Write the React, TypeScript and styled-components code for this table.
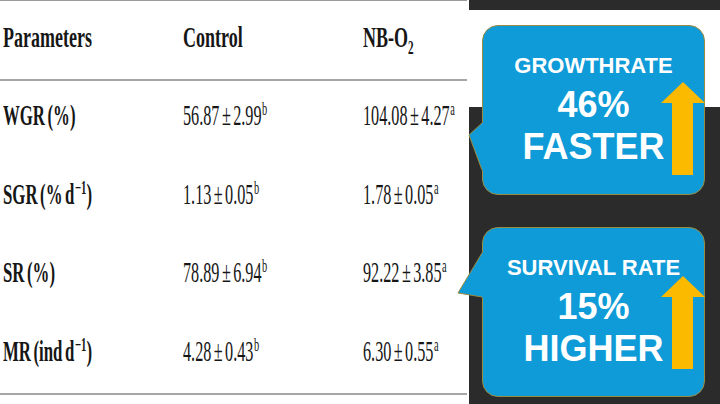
import styled, { createGlobalStyle } from "styled-components";

const GlobalStyle = createGlobalStyle`
	html, body {
		margin: 0;
		padding: 0;
		background: #fff;
	}
	#root {
		width: 720px;
		height: 404px;
		overflow: hidden;
	}
`;

interface RowProps {
	$head?: boolean;
	$last?: boolean;
}

interface SqueezeProps {
	$k: number;
}

interface BandProps {
	$h?: number;
	$dark?: boolean;
}

const rows = [
	{ label: "WGR (%)", unit: "", control: "56.87 ± 2.99", nb: "104.08 ± 4.27" },
	{ label: "SGR (% d", unit: "−1", control: "1.13 ± 0.05", nb: "1.78 ± 0.05" },
	{ label: "SR (%)", unit: "", control: "78.89 ± 6.94", nb: "92.22 ± 3.85" },
	{ label: "MR (ind d", unit: "−1", control: "4.28 ± 0.43", nb: "6.30 ± 0.55" },
];

const callouts = [
	{ label: "GROWTHRATE", figure: "46%", word: "FASTER", tail: "30,98 17,110 30,145", arrowTop: 56 },
	{ label: "SURVIVAL RATE", figure: "15%", word: "HIGHER", tail: "30,26 6,66 30,70", arrowTop: 48 },
];

function Arrow({ top }: { top: number }) {
	return (
		<ArrowSvg style={{ top }} width="44" height="93" viewBox="0 0 44 93">
			<polygon points="22,0 44,21 32,21 32,93 11,93 11,21 0,21" fill="#fbb900" />
		</ArrowSvg>
	);
}

function Tail({ points }: { points: string }) {
	const [a, tip, b] = points.split(" ");
	const [ax, ay] = a.split(",").map(Number);
	const [bx, by] = b.split(",").map(Number);
	return (
		<TailSvg width="34" height="170" viewBox="0 0 34 170">
			<polygon points={`${ax + 4},${ay - 2} ${a} ${tip} ${b} ${bx + 4},${by + 2}`} fill="#0f9bd7" />
			<polyline points={points} fill="none" stroke="#9b8a3f" strokeWidth="1" />
		</TailSvg>
	);
}

function App() {
	return (
		<>
			<GlobalStyle />
			<Page>
				<Table>
					<Row $head>
						<Cell>
							<Squeeze $k={0.6}>Parameters</Squeeze>
						</Cell>
						<Cell>
							<Squeeze $k={0.6}>Control</Squeeze>
						</Cell>
						<Cell>
							<Squeeze $k={0.6}>
								NB-O<Sub>2</Sub>
							</Squeeze>
						</Cell>
					</Row>
					{rows.map((r, i) => (
						<Row key={r.label} $last={i === rows.length - 1}>
							<Cell>
								<Squeeze $k={0.56}>
									{r.label}
									{r.unit ? (
										<>
											<Sup>{r.unit}</Sup>)
										</>
									) : null}
								</Squeeze>
							</Cell>
							<Value>
								<Squeeze $k={0.54}>
									{r.control}
									<Sup>b</Sup>
								</Squeeze>
							</Value>
							<Value>
								<Squeeze $k={0.54}>
									{r.nb}
									<Sup>a</Sup>
								</Squeeze>
							</Value>
						</Row>
					))}
				</Table>
				<Panel>
					<Band $h={10} $dark />
					<Band $h={97} />
					<Band $dark />
					<Callouts>
						{callouts.map((c) => (
							<Bubble key={c.label}>
								<Tail points={c.tail} />
								<Label>{c.label}</Label>
								<Figure>{c.figure}</Figure>
								<Word>{c.word}</Word>
								<Arrow top={c.arrowTop} />
							</Bubble>
						))}
					</Callouts>
				</Panel>
			</Page>
		</>
	);
}

const Page = styled.div`
	display: flex;
	width: 720px;
	height: 404px;
	background: #fff;
	overflow: hidden;
`;

const Table = styled.div`
	flex: none;
	width: 467px;
	border-top: 1px solid #9a9a9a;
	font-family: "Liberation Serif", "Times New Roman", serif;
	color: #161616;
`;

const Row = styled.div<RowProps>`
	display: grid;
	grid-template-columns: 180px 180px 1fr;
	box-sizing: border-box;
	height: ${({ $head }) => ($head ? "80px" : "78.5px")};
	padding-top: ${({ $head }) => ($head ? "21px" : "19px")};
	font-size: 30px;
	line-height: 30px;
	word-spacing: -0.1em;
	border-bottom: ${({ $head, $last }) => ($head || $last ? "2px solid #a6a6a6" : "none")};
`;

const Cell = styled.div`
	padding-left: 3px;
	white-space: nowrap;
	font-weight: 700;
`;

const Value = styled(Cell)`
	font-weight: 400;
`;

const Squeeze = styled.span<SqueezeProps>`
	display: inline-block;
	white-space: nowrap;
	transform: scaleX(${({ $k }) => $k});
	transform-origin: 0 50%;
`;

const Sup = styled.sup`
	font-size: 0.64em;
	line-height: 0;
	vertical-align: 10px;
	padding-left: 1px;
`;

const Sub = styled.sub`
	font-size: 0.62em;
	line-height: 0;
	vertical-align: -7px;
`;

const Panel = styled.div`
	position: relative;
	flex: 1;
	margin-left: 2px;
	display: flex;
	flex-direction: column;
`;

const Band = styled.div<BandProps>`
	flex: ${({ $h }) => ($h ? `0 0 ${$h}px` : "1")};
	background: ${({ $dark }) => ($dark ? "#2b2b2b" : "#fff")};
`;

const Callouts = styled.div`
	position: absolute;
	inset: 0;
	display: flex;
	flex-direction: column;
	gap: 32px;
	padding: 25px 15px 0 13px;
`;

const Bubble = styled.div`
	position: relative;
	box-sizing: border-box;
	height: 170px;
	padding-top: 29px;
	display: flex;
	flex-direction: column;
	align-items: center;
	background: #0f9bd7;
	border: 1px solid #9b8a3f;
	border-radius: 16px;
	color: #fff;
	font-family: "Liberation Sans", Arial, sans-serif;
	font-weight: 700;
`;

const TailSvg = styled.svg`
	position: absolute;
	left: -31px;
	top: -1px;
	overflow: visible;
`;

const ArrowSvg = styled.svg`
	position: absolute;
	left: 178px;
`;

const Label = styled.div`
	font-size: 22px;
	line-height: 22px;
	white-space: nowrap;
`;

const Figure = styled.div`
	margin-top: 10px;
	font-size: 36px;
	line-height: 36px;
`;

const Word = styled.div`
	margin-top: 6px;
	font-size: 36px;
	line-height: 36px;
`;

export default App;
